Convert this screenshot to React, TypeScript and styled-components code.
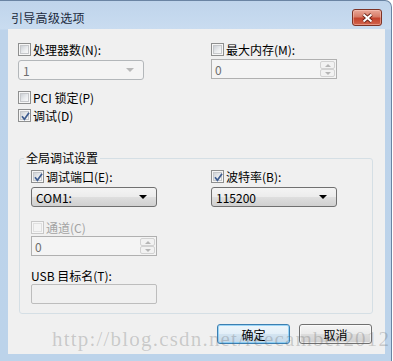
import styled, { createGlobalStyle } from "styled-components";

const GlobalStyle = createGlobalStyle`
  html, body {
    margin: 0;
    padding: 0;
    background: #ffffff;
  }
  body {
    font-family: "Noto Sans CJK SC", "Noto Sans", sans-serif;
  }
`;

const Window = styled.div`
  position: relative;
  width: 392px;
  height: 372px;
  box-sizing: border-box;
  border: 1px solid #6a84a3;
  border-left: none;
  border-radius: 0 7px 0 0;
  background: linear-gradient(180deg, #bfd4eb 0px, #c9dcf0 28px, #bdd3ea 29px, #bcd3ea 100%);
  display: flex;
  flex-direction: column;
  overflow: hidden;
`;

const TitleBar = styled.div`
  height: 28px;
  box-sizing: border-box;
  padding: 5px 9px 0 11px;
  display: flex;
  align-items: center;
  justify-content: space-between;
`;

const TitleText = styled.span`
  font-size: 12px;
  color: #1b2a3c;
  letter-spacing: 0.3px;
`;

const CloseButton = styled.div`
  width: 30px;
  height: 17px;
  box-sizing: border-box;
  border: 1px solid #7d3326;
  border-radius: 3px;
  background: linear-gradient(180deg, #eaa898 0%, #d77c68 45%, #c4432d 55%, #d2654d 100%);
  box-shadow: inset 0 0 0 1px rgba(255, 210, 200, 0.45);
  display: flex;
  align-items: center;
  justify-content: center;
`;

const Frame = styled.div`
  flex: 1;
  padding: 0 6px 0 8px;
`;

const Client = styled.div`
  width: 377px;
  height: 325px;
  box-sizing: border-box;
  background: #f0f0f0;
  padding: 12px 12px 0 10px;
  display: flex;
  flex-direction: column;
`;

const TopGrid = styled.div`
  display: grid;
  grid-template-columns: 193px 1fr;
`;

const Column = styled.div`
  display: flex;
  flex-direction: column;
`;

const CheckRow = styled.div<{ $disabled?: boolean; $gap?: number }>`
  display: flex;
  align-items: center;
  gap: 2px;
  height: 16px;
  margin-top: ${(p) => p.$gap ?? 0}px;
  font-size: 12px;
  color: ${(p) => (p.$disabled ? "#a3a3a3" : "#000000")};
  white-space: nowrap;
`;

const Label = styled.div<{ $gap?: number }>`
  height: 16px;
  display: flex;
  align-items: center;
  font-size: 12px;
  color: #000;
  margin-top: ${(p) => p.$gap ?? 0}px;
  white-space: nowrap;
`;

const Box = styled.span<{ $disabled?: boolean }>`
  position: relative;
  width: 13px;
  height: 13px;
  box-sizing: border-box;
  border: 1px solid ${(p) => (p.$disabled ? "#c8c8c8" : "#8e8f8f")};
  background: #f6f6f6;
  padding: 1px;
  display: flex;
  flex-shrink: 0;
`;

const BoxInner = styled.span<{ $disabled?: boolean }>`
  flex: 1;
  border: 1px solid ${(p) => (p.$disabled ? "#e0e0e0" : "#c6c8cb")};
  background: ${(p) =>
    p.$disabled ? "#f4f4f4" : "linear-gradient(135deg, #cdd1d6 0%, #eceef0 60%, #f8f8f8 100%)"};
`;

const Tick = styled.svg`
  position: absolute;
  left: 0;
  top: 0;
`;

const FieldBase = styled.div<{ $gap?: number }>`
  width: 126px;
  height: 20px;
  box-sizing: border-box;
  margin-top: ${(p) => p.$gap ?? 0}px;
  display: flex;
  align-items: center;
  font-size: 12px;
`;

const Select = styled(FieldBase)<{ $disabled?: boolean }>`
  border: 1px solid ${(p) => (p.$disabled ? "#b3b7ba" : "#707070")};
  border-radius: 3px;
  padding: 0 9px 0 4px;
  justify-content: space-between;
  color: ${(p) => (p.$disabled ? "#6d6d6d" : "#000")};
  background: ${(p) =>
    p.$disabled
      ? "#f4f4f4"
      : "linear-gradient(180deg, #f4f4f4 0%, #ececec 48%, #dedede 52%, #d0d0d0 100%)"};
`;

const Arrow = styled.span<{ $disabled?: boolean }>`
  width: 0;
  height: 0;
  border-left: 4px solid transparent;
  border-right: 4px solid transparent;
  border-top: 4px solid ${(p) => (p.$disabled ? "#b8b8b8" : "#000")};
`;

const Spin = styled(FieldBase)`
  border: 1px solid #b0b0b0;
  background: #f4f4f4;
  color: #6d6d6d;
  padding: 1px 1px 1px 3px;
  justify-content: space-between;
`;

const SpinButtons = styled.div`
  width: 15px;
  height: 16px;
  display: flex;
  flex-direction: column;
`;

const SpinHalf = styled.div`
  flex: 1;
  box-sizing: border-box;
  border: 1px solid #d2d2d2;
  border-radius: 2px;
  background: #f2f2f2;
  display: flex;
  align-items: center;
  justify-content: center;
`;

const SmallTri = styled.span<{ $up?: boolean }>`
  width: 0;
  height: 0;
  border-left: 3px solid transparent;
  border-right: 3px solid transparent;
  ${(p) => (p.$up ? "border-bottom: 3px solid #b5b5b5;" : "border-top: 3px solid #b5b5b5;")}
`;

const TextBox = styled(FieldBase)`
  border: 1px solid #bdbdbd;
  border-radius: 2px;
  background: #f0f0f0;
`;

const Group = styled.fieldset`
  margin: 28px 0 0 1px;
  padding: 3px 0 9px 11px;
  border: 1px solid #d5dfe5;
  border-radius: 3px;
  min-width: 0;
`;

const Legend = styled.legend`
  margin-left: -7px;
  padding: 0 2px;
  font-size: 12px;
  line-height: 14px;
  color: #000;
`;

const GroupGrid = styled.div`
  display: grid;
  grid-template-columns: 180px 1fr;
`;

const ButtonRow = styled.div`
  display: flex;
  justify-content: flex-end;
  gap: 9px;
  margin-top: 10px;
  padding-right: 1px;
`;

const DialogButton = styled.div<{ $primary?: boolean }>`
  width: 73px;
  height: 20px;
  box-sizing: border-box;
  border: 1px solid ${(p) => (p.$primary ? "#3c7fb1" : "#707070")};
  border-radius: 3px;
  background: ${(p) =>
    p.$primary
      ? "linear-gradient(180deg, #eef6fb 0%, #e3eff8 48%, #d3e4f1 52%, #c4d9ea 100%)"
      : "linear-gradient(180deg, #f4f4f4 0%, #ebebeb 48%, #dddddd 52%, #cfcfcf 100%)"};
  box-shadow: ${(p) =>
    p.$primary ? "inset 0 0 0 1px rgba(120, 200, 245, 0.7)" : "inset 0 0 0 1px rgba(255,255,255,0.6)"};
  display: flex;
  align-items: center;
  justify-content: center;
  font-size: 12px;
  color: #000;
`;

const Watermark = styled.div`
  position: absolute;
  left: 52px;
  top: 328px;
  font-family: "Liberation Serif", serif;
  font-size: 21px;
  line-height: 21px;
  letter-spacing: 1.2px;
  color: rgba(100, 100, 100, 0.28);
  white-space: nowrap;
  pointer-events: none;
`;

const Check = ({ checked, disabled }: { checked?: boolean; disabled?: boolean }) => (
  <Box $disabled={disabled}>
    <BoxInner $disabled={disabled} />
    {checked && (
      <Tick width="13" height="13" viewBox="0 0 13 13">
        <path d="M3 6.3 L5.4 9.3 L10 2.8" fill="none" stroke="#3f5d8f" strokeWidth="1.7" />
      </Tick>
    )}
  </Box>
);

const SpinBox = ({ value, gap }: { value: string; gap?: number }) => (
  <Spin $gap={gap}>
    <span>{value}</span>
    <SpinButtons>
      <SpinHalf>
        <SmallTri $up />
      </SpinHalf>
      <SpinHalf>
        <SmallTri />
      </SpinHalf>
    </SpinButtons>
  </Spin>
);

const App = () => {
  return (
    <>
      <GlobalStyle />
      <Window>
        <TitleBar>
          <TitleText>引导高级选项</TitleText>
          <CloseButton>
            <svg width="13" height="10" viewBox="0 0 13 10">
              <path d="M2.5 1.5 L10.5 8.5 M10.5 1.5 L2.5 8.5" stroke="#6a2418" strokeWidth="3.8" />
              <path d="M2.5 1.5 L10.5 8.5 M10.5 1.5 L2.5 8.5" stroke="#ffffff" strokeWidth="2" />
            </svg>
          </CloseButton>
        </TitleBar>
        <Frame>
          <Client>
            <TopGrid>
              <Column>
                <CheckRow>
                  <Check />
                  处理器数(N):
                </CheckRow>
                <Select $disabled $gap={3}>
                  <span>1</span>
                  <Arrow $disabled />
                </Select>
                <CheckRow $gap={9}>
                  <Check />
                  PCI 锁定(P)
                </CheckRow>
                <CheckRow $gap={2}>
                  <Check checked />
                  调试(D)
                </CheckRow>
              </Column>
              <Column>
                <CheckRow>
                  <Check />
                  最大内存(M):
                </CheckRow>
                <SpinBox value="0" gap={2} />
              </Column>
            </TopGrid>

            <Group>
              <Legend>全局调试设置</Legend>
              <GroupGrid>
                <Column>
                  <CheckRow>
                    <Check checked />
                    调试端口(E):
                  </CheckRow>
                  <Select $gap={3}>
                    <span>COM1:</span>
                    <Arrow />
                  </Select>
                  <CheckRow $disabled $gap={12}>
                    <Check disabled />
                    通道(C)
                  </CheckRow>
                  <SpinBox value="0" gap={1} />
                  <Label $gap={11}>USB 目标名(T):</Label>
                  <TextBox $gap={1} />
                </Column>
                <Column>
                  <CheckRow>
                    <Check checked />
                    波特率(B):
                  </CheckRow>
                  <Select $gap={3}>
                    <span>115200</span>
                    <Arrow />
                  </Select>
                </Column>
              </GroupGrid>
            </Group>

            <ButtonRow>
              <DialogButton $primary>确定</DialogButton>
              <DialogButton>取消</DialogButton>
            </ButtonRow>
          </Client>
        </Frame>
        <Watermark>http://blog.csdn.net/reecamber2012</Watermark>
      </Window>
    </>
  );
};

export default App;
